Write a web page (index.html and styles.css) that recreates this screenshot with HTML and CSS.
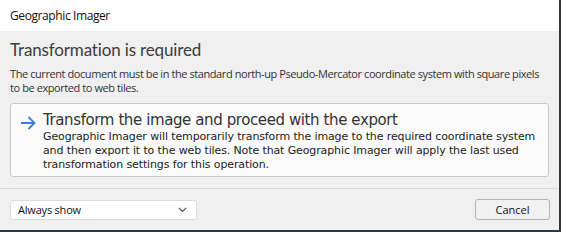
FILE: index.html
```html
<!DOCTYPE html>
<html>
<head>
<meta charset="utf-8">
<link rel="stylesheet" href="styles.css">
</head>
<body>
<div class="window">
  <div class="titlebar">Geographic Imager</div>
  <div class="content">
    <h1 class="heading">Transformation is required</h1>
    <p class="desc">The current document must be in the standard north-up Pseudo-Mercator coordinate system with square pixels to be exported to web tiles.</p>
    <div class="cmdlink">
      <svg class="arrow" width="16" height="14" viewBox="0 0 16 14"><path d="M1 7H14.5M8.5 1L14.5 7L8.5 13" fill="none" stroke="#3d7fcf" stroke-width="1.8"/></svg>
      <div class="cmdtext">
        <div class="cmdtitle">Transform the image and proceed with the export</div>
        <div class="cmdbody">Geographic Imager will temporarily transform the image to the required coordinate system and then export it to the web tiles. Note that Geographic Imager will apply the last used transformation settings for this operation.</div>
      </div>
    </div>
  </div>
  <div class="footer">
    <div class="select"><span>Always show</span><svg width="9" height="6" viewBox="0 0 9 6"><path d="M1 1L4.5 4.5L8 1" fill="none" stroke="#555" stroke-width="1.1"/></svg></div>
    <div class="button">Cancel</div>
  </div>
</div>
</body>
</html>
```
FILE: styles.css
```css
html, body { margin: 0; padding: 0; }
body { background: #2e3a3d; width: 561px; height: 232px; overflow: hidden; }
.window {
  width: 559px; height: 230px; background: #f0f0f0;
  display: flex; flex-direction: column;
  font-family: "Open Sans", "Noto Sans", sans-serif; color: #000;
}
.titlebar {
  height: 31px; background: #fff; padding-left: 10px;
  display: flex; align-items: center; font-size: 12px; color: #111;
  letter-spacing: -0.4px;
}
.content { padding: 9px 10px 0 10px; }
.heading {
  margin: 0; font-weight: normal; font-family: Lato, "Open Sans", sans-serif;
  font-size: 17px; line-height: 20px; color: #3c3c3c;
  letter-spacing: -0.15px;
}
.desc {
  margin: 7px 0 0 0; font-size: 11px; line-height: 14px; color: #333;
  letter-spacing: -0.42px;
}
.cmdlink {
  margin-top: 8px; height: 74px; box-sizing: border-box;
  border: 1px solid #c9c9c9; border-radius: 3px; background: #fbfbfb;
  display: flex; padding: 7px 10px 0 9px;
}
.arrow { margin-top: 5px; flex: none; }
.cmdtext { margin-left: 7px; }
.cmdtitle {
  font-family: "DejaVu Sans", Verdana, sans-serif; font-size: 15px; line-height: 19px; color: #333;
  letter-spacing: -0.4px;
}
.cmdbody {
  font-family: "DejaVu Sans", Verdana, sans-serif; font-size: 11px; line-height: 14px; color: #222;
  letter-spacing: -0.12px; margin-top: 0px;
}
.footer {
  margin-top: auto; border-top: 1px solid #dadada; height: 41px;
  display: flex; align-items: center; justify-content: space-between;
  padding: 0 9px 0 10px; margin-bottom: 0;
}
.select {
  width: 187px; height: 20px; box-sizing: border-box; background: #fff;
  border: 1px solid #dcdcdc; border-radius: 3px;
  display: flex; align-items: center; justify-content: space-between;
  padding: 0 9px 0 7px; font-size: 11px; color: #111; letter-spacing: -0.2px;
}
.button {
  width: 75px; height: 21px; box-sizing: border-box; background: #f2f2f2;
  border: 1px solid #b5b5b5; border-radius: 3px;
  display: flex; align-items: center; justify-content: center; font-size: 11px; color: #111;
}
```
